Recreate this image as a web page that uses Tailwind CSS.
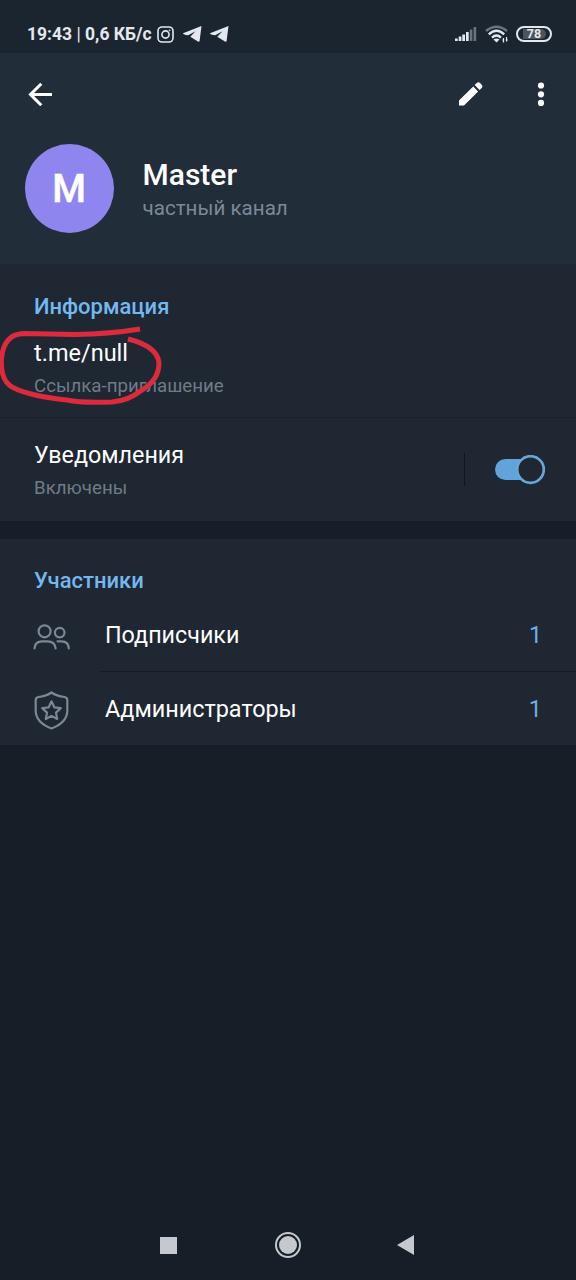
<!DOCTYPE html>
<html lang="ru">
<head>
<meta charset="utf-8">
<title>Master</title>
<script src="https://cdn.jsdelivr.net/npm/@tailwindcss/browser@4"></script>
</head>
<body class="bg-[#161e27] text-white font-['Roboto',sans-serif]">
<div class="relative flex h-[1280px] w-[576px] flex-col overflow-hidden">
  <!-- Status bar -->
  <div class="flex h-[53px] items-center bg-[#1b2530] pt-[15px] pl-[27px] pr-[24px] text-[#e4e8ee]">
    <span class="w-[126px] text-[17.5px] leading-6 font-bold whitespace-nowrap"><span>19:43</span><span class="font-normal"> | </span><span>0,6 КБ/с</span></span>
    <svg class="ml-[4px] h-[17px] w-[17px]" viewBox="0 0 17 17" fill="none" stroke="currentColor" stroke-width="1.6"><rect x="1" y="1" width="15" height="15" rx="4"/><circle cx="8.5" cy="8.5" r="3.6"/><circle cx="12.6" cy="4.3" r=".6" fill="currentColor" stroke-width=".6"/></svg>
    <svg class="ml-[9px] h-[16px] w-[19px]" viewBox="0 0 19 16" fill="currentColor"><path d="M18.500 0 0 7.300Q-.2 8.300 5.200 9.300L12.500 5.200 7.300 10.800 15.300 15.800Q16.300 16 16.600 15Z"/></svg>
    <svg class="ml-[8px] h-[16px] w-[19px]" viewBox="0 0 19 16" fill="currentColor"><path d="M18.500 0 0 7.300Q-.2 8.300 5.200 9.300L12.500 5.200 7.300 10.800 15.300 15.800Q16.300 16 16.600 15Z"/></svg>
    <svg class="ml-auto h-[16px] w-[22px]" viewBox="0 0 22 16" fill="currentColor"><path d="M0 12.500h2.700V15H0ZM3.700 10.500h2.700V15H3.700ZM7.300 8.500H10V15H7.300ZM11 6h2.700v9H11Z"/><path opacity=".4" d="M14.800 3.500h2.600V15h-2.600ZM18.600 1h2.600v14h-2.600Z"/></svg>
    <svg class="ml-[8px] h-[18px] w-[24px]" viewBox="0 0 24 18" fill="none" stroke="currentColor" stroke-width="2.400"><path opacity=".4" d="M1 6Q11.500-2.500 22 6"/><path d="M3.800 9.300Q11.500 2.300 19.200 9.300M7 12.600Q11.500 8.600 16 12.600"/><path d="m8.500 14.500 3 3 3-3Q11.500 12.500 8.500 14.500Z" fill="currentColor" stroke="none"/><path stroke-width="1.200" d="M18.500 13v4.500M21.500 12v4.500M17.300 15h1M21.700 15h1.200"/></svg>
    <span class="ml-[7px] flex h-[16px] w-[36px] items-center justify-center rounded-full border-2 border-[#e4e8ee] bg-[#1b2530]"><span class="flex h-[10px] w-[23px] items-center justify-center rounded-r-full bg-[#4c545d] text-[12.500px] leading-[10px] font-bold">78</span></span>
  </div>

  <!-- Channel header -->
  <header class="flex h-[211px] flex-col bg-[#222d3a]">
    <div class="flex h-[82px] items-center pl-[28px]">
      <svg class="h-[24px] w-[25px]" viewBox="0 0 25 24" fill="none" stroke="white" stroke-width="3"><path d="M24 12.500H3M13.300 1.700 2.500 12.500l10.800 10.800"/></svg>
      <svg class="ml-[405px] h-[24px] w-[25px]" viewBox="0 0 25 24" fill="white"><path d="M1 18.500 15.200 4.600l4.900 4.900L6 23.500H1ZM16.700 3.100 18.800 1q1.600-1.400 3.200.1l1.700 1.700q1.400 1.600 0 3.200L21.600 8Z"/></svg>
      <svg class="ml-[54px] h-[24px] w-[8px]" viewBox="0 0 8 24" fill="white"><circle cx="4" cy="3.500" r="3.100"/><circle cx="4" cy="12.300" r="3.100"/><circle cx="4" cy="20.900" r="3.100"/></svg>
    </div>
    <div class="flex pl-[25px] pt-[9px]">
      <div class="flex h-[89px] w-[89px] items-center justify-center rounded-full bg-[#8f85ee] pt-[2px] pr-px text-[38.500px] font-medium leading-none [-webkit-text-stroke:0.500px_white]">M</div>
      <div class="ml-[28.500px] flex flex-col pt-[13px]">
        <h1 class="text-[30px] leading-9 font-medium">Master</h1>
        <span class="pt-px text-[20.600px] leading-7 text-[#7c8997]">частный канал</span>
      </div>
    </div>
  </header>

  <!-- Information -->
  <section class="flex h-[257px] flex-col bg-[#1e2732]">
    <div class="flex h-[154px] flex-col border-b border-[#19212b] pt-[29px] pl-[34px]">
      <h2 class="text-[22px] leading-7 font-medium text-[#74b8ef]">Информация</h2>
      <span class="mt-[16px] text-[23.500px] leading-8">t.me/null</span>
      <span class="mt-[3px] text-[18.700px] leading-7 text-[#707b88]">Ссылка-приглашение</span>
    </div>
    <div class="flex h-[103px] items-center pl-[34px] pr-[30px]">
      <div class="flex flex-col pt-[2px]">
        <span class="text-[23.300px] leading-8">Уведомления</span>
        <span class="mt-[3px] text-[18.700px] leading-7 text-[#707b88]">Включены</span>
      </div>
      <div class="ml-auto h-[33px] w-px bg-[#10161d]"></div>
      <svg class="ml-[29px] h-[30px] w-[52px]" viewBox="0 0 52 30"><rect x="1" y="4" width="42" height="21" rx="10.500" fill="#62a4da"/><circle cx="36.500" cy="14.500" r="13.300" fill="#1e2732" stroke="#6aa5d8" stroke-width="2.700"/></svg>
    </div>
  </section>

  <div class="h-[18px] bg-[#171e28]"></div>

  <!-- Members -->
  <section class="flex h-[206px] flex-col bg-[#1e2732] pt-[28px]">
    <h2 class="pl-[34px] text-[22px] leading-7 font-medium text-[#74b8ef]">Участники</h2>
    <div class="flex h-[77px] items-center pl-[33px]">
      <svg class="mt-[6px] h-[28px] w-[38px]" viewBox="0 0 38 28" fill="none" stroke="#7b8794" stroke-width="2.200" stroke-linecap="round"><circle cx="11.600" cy="8.300" r="6"/><circle cx="26.700" cy="9.600" r="4.800"/><path d="M1.500 25.500Q2 18.300 9 18.300h5.500Q22 18.300 22.600 25.500M24.500 18.300h4Q35.500 18.300 35.800 25.500"/></svg>
      <div class="ml-[29px] flex h-full flex-1 items-center justify-between border-b border-[#151c25] pt-[5px] pl-[5px] pr-[34px] text-[23.300px]"><span>Подписчики</span><span class="text-[#70afe3]">1</span></div>
    </div>
    <div class="flex h-[73px] items-center pl-[33px] pr-[34px] text-[23.400px]">
      <svg class="mt-[3px] h-[39px] w-[38px]" viewBox="0 0 38 39" fill="none" stroke="#7b8794" stroke-width="2.200" stroke-linejoin="round"><path d="M18.500 1.500Q23.500 5.200 31.500 6 34.300 6.500 34.300 9v10.500Q34.300 31.500 18.500 37.500 2.700 31.500 2.700 19.500V9Q2.700 6.500 5.500 6 13.500 5.200 18.500 1.500Z"/><path d="m18.500 10.300 2.800 6 6.500.8-4.800 4.500 1.200 6.400-5.700-3.100-5.700 3.100 1.200-6.400-4.800-4.500 6.500-.8Z"/></svg>
      <span class="ml-[34px] pt-[3px]">Администраторы</span><span class="ml-auto pt-[3px] text-[#70afe3]">1</span>
    </div>
  </section>

  <!-- System navigation -->
  <nav class="mt-auto flex h-[70px] items-center pl-[160px] text-[#c5c8cc]">
    <div class="h-[17px] w-[17px] bg-current"></div>
    <svg class="ml-[98px] h-[26px] w-[26px]" viewBox="0 0 26 26"><circle cx="13" cy="13" r="12" fill="none" stroke="currentColor" stroke-width="2"/><circle cx="13" cy="13" r="9" fill="currentColor"/></svg>
    <svg class="ml-[96px] h-[20px] w-[17px]" viewBox="0 0 17 20" fill="currentColor"><path d="M0 10 17 0v20Z"/></svg>
  </nav>

  <!-- Hand-drawn marker around the link -->
  <svg class="pointer-events-none absolute left-0 top-[310px] h-[110px] w-[180px]" viewBox="0 0 180 110" fill="none" stroke="#de2a3d" stroke-width="5"><path d="M140 19Q110 24 75 24.500L24 23.500Q4 24 1.500 48 0 72 14 78 30 86 67 90 80 93 112 92 128 91 142 80C152 74 159 66 159 53 158 40 144 33 128 29"/></svg>
</div>
</body>
</html>
